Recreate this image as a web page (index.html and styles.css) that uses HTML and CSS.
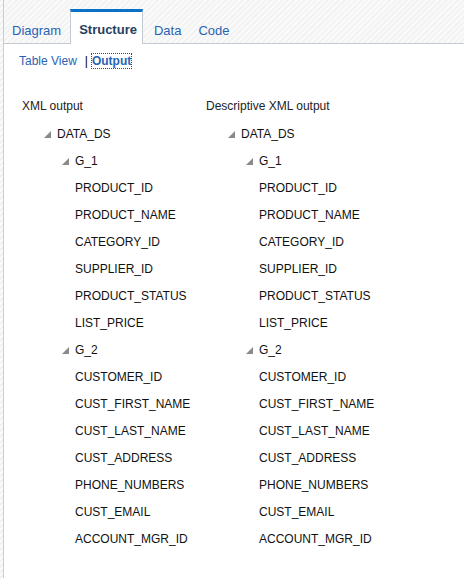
FILE: index.html
```html
<!DOCTYPE HTML>
<html>
<head>
<meta charset="UTF-8">
<title>Structure</title>
<link rel="stylesheet" href="styles.css">
</head>
<body>
<div class="page">
  <div class="edge"></div>
  <main class="panel">
    <nav class="tabs">
      <a class="tab">Diagram</a>
      <a class="tab active">Structure</a>
      <a class="tab">Data</a>
      <a class="tab">Code</a>
    </nav>
    <div class="views">
      <a class="view">Table View</a>
      <span class="sep">|</span>
      <a class="view current">Output</a>
    </div>
    <div class="columns">
      <section class="col">
        <h2 class="col-title">XML output</h2>
        <ul class="tree">
          <li class="node lvl1"><svg class="tri" width="7" height="7"><polygon points="7,0 7,7 0,7"/></svg>DATA_DS</li>
          <li class="node lvl2"><svg class="tri" width="7" height="7"><polygon points="7,0 7,7 0,7"/></svg>G_1</li>
          <li class="leaf">PRODUCT_ID</li>
          <li class="leaf">PRODUCT_NAME</li>
          <li class="leaf">CATEGORY_ID</li>
          <li class="leaf">SUPPLIER_ID</li>
          <li class="leaf">PRODUCT_STATUS</li>
          <li class="leaf">LIST_PRICE</li>
          <li class="node lvl2"><svg class="tri" width="7" height="7"><polygon points="7,0 7,7 0,7"/></svg>G_2</li>
          <li class="leaf">CUSTOMER_ID</li>
          <li class="leaf">CUST_FIRST_NAME</li>
          <li class="leaf">CUST_LAST_NAME</li>
          <li class="leaf">CUST_ADDRESS</li>
          <li class="leaf">PHONE_NUMBERS</li>
          <li class="leaf">CUST_EMAIL</li>
          <li class="leaf">ACCOUNT_MGR_ID</li>
        </ul>
      </section>
      <section class="col">
        <h2 class="col-title">Descriptive XML output</h2>
        <ul class="tree">
          <li class="node lvl1"><svg class="tri" width="7" height="7"><polygon points="7,0 7,7 0,7"/></svg>DATA_DS</li>
          <li class="node lvl2"><svg class="tri" width="7" height="7"><polygon points="7,0 7,7 0,7"/></svg>G_1</li>
          <li class="leaf">PRODUCT_ID</li>
          <li class="leaf">PRODUCT_NAME</li>
          <li class="leaf">CATEGORY_ID</li>
          <li class="leaf">SUPPLIER_ID</li>
          <li class="leaf">PRODUCT_STATUS</li>
          <li class="leaf">LIST_PRICE</li>
          <li class="node lvl2"><svg class="tri" width="7" height="7"><polygon points="7,0 7,7 0,7"/></svg>G_2</li>
          <li class="leaf">CUSTOMER_ID</li>
          <li class="leaf">CUST_FIRST_NAME</li>
          <li class="leaf">CUST_LAST_NAME</li>
          <li class="leaf">CUST_ADDRESS</li>
          <li class="leaf">PHONE_NUMBERS</li>
          <li class="leaf">CUST_EMAIL</li>
          <li class="leaf">ACCOUNT_MGR_ID</li>
        </ul>
      </section>
    </div>
  </main>
</div>
</body>
</html>
```
FILE: styles.css
```css
html, body {
  margin: 0;
  padding: 0;
  background: #fff;
}

body {
  font-family: "Liberation Sans", Arial, sans-serif;
  font-size: 12px;
  color: #000;
}

.page {
  display: flex;
  min-height: 578px;
}

.edge {
  width: 3px;
  flex: none;
  background: repeating-linear-gradient(135deg, #f2f2f2 0 2px, #fbfbfb 2px 4px);
  border-right: 1px solid #c7ced6;
}

.panel {
  flex: 1;
}

.tabs {
  display: flex;
  align-items: flex-end;
  height: 43px;
  border-bottom: 1px solid #c3cad2;
  background: repeating-linear-gradient(135deg, #f3f3f3 0 2px, #fafafa 2px 4px);
  font-size: 13px;
}

.tab {
  display: block;
  height: 31px;
  line-height: 37px;
  padding: 0 8px;
  color: #2a62b4;
  cursor: pointer;
}

.tab:first-child {
  padding: 0 9px 0 8px;
}

.tab.active {
  margin: 0 0 -1px;
  height: 32px;
  padding: 0 5px 0 8px;
  line-height: 36px;
  border-top: 3px solid #0a71c9;
  border-left: 1px solid #c3cad2;
  border-right: 1px solid #c3cad2;
  background: #fff;
  color: #27405e;
  font-weight: bold;
}

.tab.active + .tab {
  padding-left: 11px;
  padding-right: 9px;
}

.views {
  display: flex;
  align-items: center;
  padding: 9px 0 0 15px;
  height: 16px;
  color: #2a62b4;
}

.view {
  cursor: pointer;
}

.sep {
  color: #000;
  margin: 0 4px 0 8px;
}

.current {
  font-weight: bold;
  outline: 1px dotted #1f4e8c;
  outline-offset: 0;
}

.columns {
  display: flex;
  padding: 29px 0 0 18px;
}

.col {
  width: 184px;
}

.col-title {
  margin: 0;
  font-size: 12px;
  font-weight: normal;
  color: #222;
  line-height: 16px;
}

.tree {
  list-style: none;
  margin: 0;
  padding: 6px 0 0 0;
}

.tree li {
  display: flex;
  align-items: center;
  height: 27px;
  color: #111;
}

.tri {
  fill: #8a8a8a;
  margin-right: 6px;
  margin-top: 2px;
}

.lvl1 {
  padding-left: 22px;
}

.lvl2 {
  padding-left: 40px;
}

.leaf {
  padding-left: 53px;
}
```
